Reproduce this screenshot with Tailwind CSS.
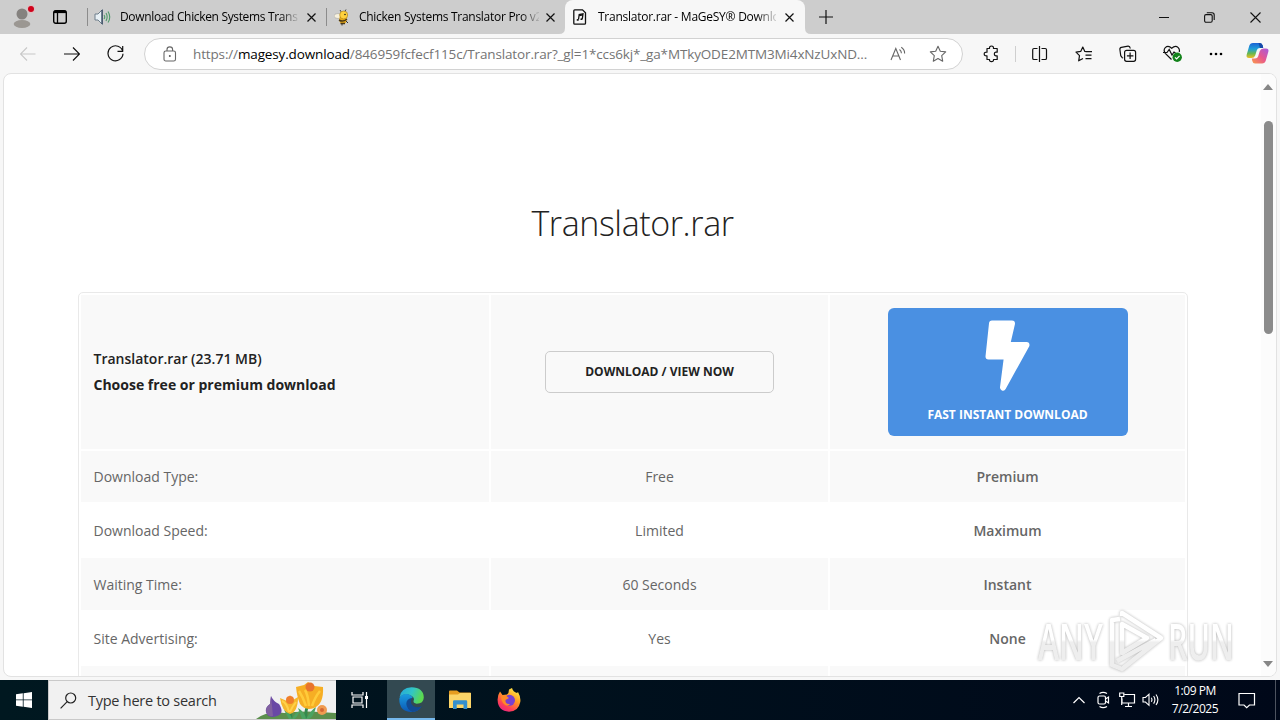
<!DOCTYPE html>
<html lang="en">
<head>
<meta charset="utf-8">
<title>Translator.rar - MaGeSY® Download</title>
<script src="https://cdn.jsdelivr.net/npm/@tailwindcss/browser@4"></script>
</head>
<body class="w-[1280px] h-[720px] overflow-hidden flex flex-col relative bg-[#f7f7f7] font-['Open_Sans',sans-serif] text-black">

<!-- Tab strip -->
<div class="h-[34px] shrink-0 bg-[#cdcdcd] flex items-stretch">
  <div class="w-11 flex items-center pl-[11px]">
    <svg width="26" height="28" viewBox="0 0 26 28"><ellipse cx="11" cy="21" rx="8.3" ry="4" fill="#9b9792"/><circle cx="11" cy="11" r="5.500" fill="#85827f"/><circle cx="20" cy="6" r="4.200" fill="#dcbfc1"/><circle cx="20" cy="6" r="3" fill="#d0021b"/></svg>
  </div>
  <div class="w-[43px] flex items-center pl-[9px]">
    <svg width="14" height="14" viewBox="0 0 14 14" fill="none" stroke="#000"><rect x=".7" y=".7" width="12.600" height="12.600" rx="2" stroke-width="1.400"/><path d="M4.500 3V13" stroke-width="1.300"/><path d="M1 1.900H13" stroke-width="2.400"/></svg>
  </div>
  <div class="w-px my-[8px] bg-[#8c8c8c]"></div>
  <div class="w-[238px] flex items-center pl-[6px]">
    <svg class="shrink-0" width="17" height="18" viewBox="0 0 17 18"><path d="M1 6H4L8.500 1.500V16.500L4 12H1Z" fill="#e8f0f5" stroke="#6e7f8c"/><path d="M8 2V16" stroke="#3e4f66" stroke-width="1.400"/><g fill="none" stroke="#4f9a6a" stroke-width="1.100"><path d="M10 7Q11.500 9 10 11M12 5Q14.300 9 12 13M14 3.500Q17.500 9 14 14.500"/></g></svg>
    <div class="ml-[9px] w-[180px] h-5 leading-5 text-[12px] tracking-[-0.34px] whitespace-nowrap overflow-hidden [mask-image:linear-gradient(to_right,#000_160px,transparent_180px)]">Download Chicken Systems Trans</div>
    <svg class="ml-[7px] shrink-0" width="9" height="9" viewBox="0 0 9 9" stroke="#111" stroke-width="1.200"><path d="M.5.5L8.500 8.500M8.500.5L.5 8.500"/></svg>
  </div>
  <div class="w-px my-[8px] bg-[#8c8c8c]"></div>
  <div class="w-[238px] flex items-center pl-[7px]">
    <svg class="shrink-0" width="16" height="18" viewBox="0 0 16 18"><path d="M6 2L8 5M12 1.500L10.500 4" stroke="#444" fill="none"/><ellipse cx="4" cy="8" rx="4" ry="2.500" fill="#f7f1de" stroke="#999" stroke-width=".5"/><ellipse cx="9" cy="11.500" rx="3.800" ry="4.500" fill="#e9ab16"/><path d="M5 12Q9 14.500 13 11M6.500 15.500H11" stroke="#473719" stroke-width="1.500" fill="none"/><circle cx="9.700" cy="7" r="4" fill="#ffd13c" stroke="#a67814" stroke-width=".6"/><circle cx="11" cy="6.500" r=".8" fill="#222"/><path d="M12 13L14 15M8 16V17.500" stroke="#333"/></svg>
    <div class="ml-[9px] w-[180px] h-5 leading-5 text-[12px] tracking-[-0.28px] whitespace-nowrap overflow-hidden [mask-image:linear-gradient(to_right,#000_162px,transparent_182px)]">Chicken Systems Translator Pro v2</div>
    <svg class="ml-[7px] shrink-0" width="9" height="9" viewBox="0 0 9 9" stroke="#111" stroke-width="1.200"><path d="M.5.5L8.500 8.500M8.500.5L.5 8.500"/></svg>
  </div>
  <div class="w-[240px] rounded-t-lg bg-[#f7f7f7] flex items-center pl-[8px] relative">
    <svg class="absolute -left-[6px] bottom-0" width="6" height="6"><path d="M6 0V6H0Q6 6 6 0" fill="#f7f7f7"/></svg>
    <svg class="absolute -right-[6px] bottom-0" width="6" height="6"><path d="M0 0V6H6Q0 6 0 0" fill="#f7f7f7"/></svg>
    <svg class="shrink-0" width="14" height="16" viewBox="0 0 14 16" fill="none" stroke="#111" stroke-width="1.300"><path d="M1.700.8H9.500L12.500 3.800V14.300Q12.500 15.200 11.500 15.200H1.700Q.8 15.200.8 14.300V1.700Q.8.8 1.700.8Z"/><path d="M5.500 10.500L6.200 5.500L10 4.800L9.300 9.800"/><path d="M6.200 6.500L9.900 5.800"/><ellipse cx="4.700" cy="10.900" rx="1.100" ry=".9" fill="#111" stroke="none"/><ellipse cx="8.500" cy="10.200" rx="1.100" ry=".9" fill="#111" stroke="none"/></svg>
    <div class="ml-[11px] w-[178px] h-5 leading-5 text-[12px] tracking-[-0.25px] whitespace-nowrap overflow-hidden [mask-image:linear-gradient(to_right,#000_158px,transparent_182px)]">Translator.rar - MaGeSY® Downlo</div>
    <svg class="ml-[9px] shrink-0" width="9" height="9" viewBox="0 0 9 9" stroke="#111" stroke-width="1.200"><path d="M.5.5L8.500 8.500M8.500.5L.5 8.500"/></svg>
  </div>
  <div class="w-[42px] flex items-center justify-center"><svg width="14" height="14" stroke="#111" stroke-width="1.200"><path d="M7 0V14M0 7H14"/></svg></div>
  <div class="ml-auto w-[138px] pr-px -translate-x-px flex items-center">
    <div class="flex-1 flex justify-center"><svg width="10" height="10" stroke="#111"><path d="M0 5.500H10"/></svg></div>
    <div class="flex-1 flex justify-center"><svg width="11" height="11" fill="none" stroke="#111" stroke-width="1.100"><rect x=".6" y="2.600" width="7.600" height="7.600" rx="1.400"/><path d="M2.800.7H8Q10.200.7 10.200 3V8"/></svg></div>
    <div class="flex-1 flex justify-center"><svg width="11" height="11" stroke="#111" stroke-width="1.100"><path d="M.5.5L10.500 10.500M10.500.5L.5 10.500"/></svg></div>
  </div>
</div>

<!-- Address bar and toolbar -->
<div class="h-[39px] shrink-0 flex items-center">
  <div class="w-[144px] flex items-center pl-[20px] gap-[28px]">
    <svg width="16" height="16" viewBox="0 0 16 16" fill="none" stroke="#c8c8c8" stroke-width="1.100"><path d="M.5 8H15.500M7 1.500L.5 8L7 14.500"/></svg>
    <svg width="16" height="16" viewBox="0 0 16 16" fill="none" stroke="#111" stroke-width="1.200"><path d="M0 8H15.500M9 1.500L15.500 8L9 14.500"/></svg>
    <svg class="-ml-px" width="17" height="17" viewBox="0 0 17 17" fill="none" stroke="#111" stroke-width="1.200"><path d="M15.800 6.500A7.500 7.500 0 1 0 16 8.800M15.700 1V6.300H10.500"/></svg>
  </div>
  <div class="w-[819px] h-8 rounded-full bg-white border border-[#d2d2d2] flex items-center pl-[18px]">
    <svg width="14" height="16" viewBox="0 0 14 16" fill="none" stroke="#666" stroke-width="1.100"><rect x="1" y="5" width="11.500" height="10" rx="1.800"/><path d="M4 5V3.500Q4 .9 6.800.9Q9.600.9 9.600 3.500V5"/><circle cx="6.800" cy="10" r="1" fill="#555" stroke="none"/></svg>
    <div class="ml-[16px] w-[676px] whitespace-nowrap text-[13.500px] leading-5 text-[#747474] tracking-[-0.142px]"><span>https://</span><span class="text-black">magesy.download</span><span>/846959fcfecf115c/Translator.rar?_gl=1*ccs6kj*_ga*MTkyODE2MTM3Mi4xNzUxND...</span></div>
    <svg class="ml-[21px]" width="17" height="16" viewBox="0 0 17 16" fill="none" stroke="#666" stroke-width="1.100"><path d="M1 14L5.800 2.500L10.500 14M2.700 10H8.900M9.500 3.500Q11.500 5 11.400 7.200M11.300 1.300Q14.800 3.800 14.600 7.500"/></svg>
    <svg class="ml-[22px]" width="18" height="18" viewBox="0 0 18 18" fill="none" stroke="#666" stroke-width="1.100" stroke-linejoin="round"><path d="M9 1.200L11.300 6.200L16.700 6.900L12.700 10.600L13.700 16.200L9 13.500L4.300 16.200L5.300 10.600L1.300 6.900L6.700 6.200Z"/></svg>
  </div>
  <div class="flex-1 flex items-center pl-[20px]">
    <svg width="18" height="18" viewBox="0 0 18 18" fill="none" stroke="#111" stroke-width="1.200" stroke-linejoin="round"><path d="M4 3.500H6.500Q6.300 1 8.500 1Q10.700 1 10.500 3.500H14.200V7.200H12.800Q11.300 7.400 11.300 9Q11.300 10.600 12.800 10.800H14.200V14.500H10.500Q10.700 16.700 8.500 16.700Q6.300 16.700 6.500 14.500H4V10.800Q1.200 11 1.200 9Q1.200 7 4 7.200Z"/></svg>
    <div class="ml-[14px] w-px h-4 bg-[#cfcfcf]"></div>
    <svg class="ml-[16px]" width="16" height="16" viewBox="0 0 16 16" fill="none" stroke="#111" stroke-width="1.200"><path d="M7.500 0V16M5.500 2.500H2Q.7 2.500.7 3.800V12.200Q.7 13.500 2 13.500H5.500M9.500 2.500H13.200Q14.500 2.500 14.500 3.800V12.200Q14.500 13.500 13.200 13.500H9.500"/></svg>
    <svg class="ml-[27px]" width="18" height="18" viewBox="0 0 18 18" fill="none" stroke="#111" stroke-width="1.200" stroke-linejoin="round"><path d="M11.500 6.500H9.800L7.800 2L5.700 6.400L1 7.100L4.500 10.700L3.700 15.800L8 13.500M10.500 6.700H17M10.500 10.200H16.500M10.500 13.700H16.500"/></svg>
    <svg class="ml-[26px]" width="18" height="18" viewBox="0 0 18 18" fill="none" stroke="#111" stroke-width="1.200"><path d="M4.200 13L3.300 12.700Q1.200 11 1.500 9L.9 4.500Q.6 2.700 2.400 2.400L9 1.200Q10.900 1 11.300 3.500"/><rect x="5.600" y="5.300" width="11" height="11" rx="2"/><path d="M11.100 7.500V14M7.900 10.800H14.400"/></svg>
    <svg class="ml-[26px]" width="20" height="19" viewBox="0 0 20 19" fill="none" stroke="#111" stroke-width="1.200"><path d="M8.500 15.500L2.300 9.300Q0 6 2.300 3.600Q5.200 1 8.700 4.200Q12.300 1 15.200 3.600Q17 5.500 16.200 8M0 8.500H4L6.200 5.500L9 11L11 8L12.500 9"/><circle cx="14.200" cy="13.300" r="4.700" fill="#13831b" stroke="none"/><path d="M12 13.300L13.600 14.900L16.600 11.900" stroke="#fff"/></svg>
    <svg class="ml-[26px]" width="14" height="4"><circle cx="2" cy="2" r="1.300"/><circle cx="7" cy="2" r="1.300"/><circle cx="12" cy="2" r="1.300"/></svg>
    <svg class="ml-[23px]" width="23" height="21" viewBox="0 0 23 21"><defs><linearGradient id="cpa" x1="0" y1="0" x2="0" y2="1"><stop offset="0" stop-color="#1b62d5"/><stop offset=".4" stop-color="#1f9fd8"/><stop offset=".7" stop-color="#69b850"/><stop offset="1" stop-color="#f1bd22"/></linearGradient><linearGradient id="cpb" x1="1" y1="0" x2="0" y2="1"><stop offset="0" stop-color="#a45be0"/><stop offset=".5" stop-color="#e8588d"/><stop offset="1" stop-color="#fa9a4b"/></linearGradient></defs><path d="M7 0H14Q16 0 16.700 2.500L17.200 5H14Q11.500 5 10.800 7.200L9.200 12.500Q8.300 15 5.500 15H3Q0 15 .6 12L3.200 3Q4 0 7 0Z" fill="url(#cpa)"/><path d="M16 20.500H9Q7 20.500 6.300 18L5.800 15.500H9Q11.500 15.500 12.200 13.300L13.800 8Q14.700 5.500 17.500 5.500H20Q23 5.500 22.400 8.500L19.800 17.500Q19 20.500 16 20.500Z" fill="url(#cpb)"/><path d="M14 0Q16 0 16.700 2.500L17.200 5H14L12.500 0Z" fill="#1649a8"/></svg>
  </div>
</div>

<!-- Page viewport -->
<div class="mx-[3px] h-[604px] shrink-0 rounded-lg border border-[#e2e2e2] bg-white overflow-hidden flex">
  <main class="w-[1257px] flex flex-col">
    <h1 class="mt-[124px] h-[50px] leading-[50px] text-center text-[34px] font-light text-[#222] tracking-[-0.4px]">Translator.rar</h1>
    <div class="mt-[44px] ml-[74px] w-[1110px] h-[440px] shrink-0 rounded-[5px] border border-[#e9e9e9] p-[2px] grid grid-cols-[408px_337px_355px] grid-rows-[154px_51px_52px_52px_52px_52px] gap-[2px] text-[14px] text-[#666] *:flex *:items-center">
      <div class="bg-[#f9f9f9] pl-[12.500px] leading-[26px] text-[#222]"><div><p class="font-semibold">Translator.rar (23.71 MB)</p><p class="font-bold">Choose free or premium download</p></div></div>
      <div class="bg-[#f9f9f9] justify-center"><div class="w-[229px] h-[42px] rounded-[5px] border border-[#ccc] flex items-center justify-center text-[12px] font-bold text-[#222]">DOWNLOAD / VIEW NOW</div></div>
      <div class="bg-[#f9f9f9] justify-center"><div class="w-[240px] h-[128px] rounded-[6px] bg-[#4a90e2] flex flex-col items-center pt-[12px] text-white text-[12px] font-bold">
        <svg width="46" height="72" viewBox="0 0 46 72" fill="#fff" stroke="#fff" stroke-width="6" stroke-linejoin="round"><path d="M7 3.500H27L22 25H41.500L18 67.500L22 36.500H3.500Z"/></svg>
        <span class="mt-[14px] leading-[18px]">FAST INSTANT DOWNLOAD</span></div></div>
      <div class="bg-[#f9f9f9] pl-[12.500px]">Download Type:</div><div class="bg-[#f9f9f9] justify-center">Free</div><div class="bg-[#f9f9f9] justify-center font-semibold">Premium</div>
      <div class="pl-[12.500px]">Download Speed:</div><div class="justify-center">Limited</div><div class="justify-center font-semibold">Maximum</div>
      <div class="bg-[#f9f9f9] pl-[12.500px]">Waiting Time:</div><div class="bg-[#f9f9f9] justify-center">60 Seconds</div><div class="bg-[#f9f9f9] justify-center font-semibold">Instant</div>
      <div class="pl-[12.500px]">Site Advertising:</div><div class="justify-center">Yes</div><div class="justify-center font-semibold">None</div>
      <div class="bg-[#f9f9f9]"></div><div class="bg-[#f9f9f9]"></div><div class="bg-[#f9f9f9]"></div>
    </div>
  </main>
  <div class="flex-1 bg-[#fcfcfc] flex flex-col items-center pt-[10px] pb-[9px] pr-[1px]">
    <svg width="10" height="6"><path d="M5 0L10 6H0Z" fill="#868686"/></svg>
    <div class="mt-[31px] w-[9px] h-[213px] rounded-full bg-[#8b8b8b]"></div>
    <svg class="mt-auto" width="10" height="6"><path d="M0 0H10L5 6Z" fill="#868686"/></svg>
  </div>
</div>

<!-- Taskbar -->
<div class="mt-[3px] h-10 shrink-0 bg-linear-to-r from-[#001820] to-[#000819] flex items-stretch text-white">
  <div class="w-12 flex items-center justify-center"><svg width="16" height="16" fill="#fff"><path d="M0 2.300L6.800 1.300V7.500H0ZM7.600 1.200L16 0V7.500H7.600ZM0 8.300H6.800V14.700L0 13.700ZM7.600 8.300H16V16L7.600 14.800Z"/></svg></div>
  <div class="w-[288px] bg-[#f1f1f1] border border-[#c9c9c9] border-r-0 flex items-center pl-[11px]">
    <svg width="17" height="17" viewBox="0 0 17 17" fill="none" stroke="#222" stroke-width="1.200"><circle cx="10.700" cy="6" r="5"/><path d="M7.200 9.700L.6 16.300"/></svg>
    <div class="ml-[11px] w-[160px] pt-[2px] text-[14.500px] tracking-[-0.25px] text-[#333]">Type here to search</div>
    <svg class="ml-auto" width="80" height="38" viewBox="0 0 80 38"><path d="M0 38Q12 29 28 32Q48 29 79 32H80V38Z" fill="#5b8f4c"/><path d="M15 15Q17 20 23 23Q29 32 21 35Q12 38 10 31Q9 26 14 23Z" fill="#6948a5"/><path d="M15 15L17 35Q11 36 10 30Q10 26 14 23Z" fill="#80609f"/><path d="M35 38Q34 30 35 26M50 38Q49 25 54 24" stroke="#338a4f" stroke-width="3" fill="none"/><path d="M28 29Q34 31 36 38Q39 31 44 30Q40 38 38 38H33ZM42 27Q49 31 50 38Q56 28 60 26Q57 38 52 38H46Z" fill="#4ba361"/><path d="M24 17L31 20L34 14L37 19L42 16Q42 31 34 33Q26 31 24 17Z" fill="#f6b72b"/><circle cx="34" cy="19" r="4" fill="#ef7e2c"/><path d="M26 20Q31 22 33 31M40 21Q36 26 34 31" stroke="#ffd04a" stroke-width="2" fill="none"/><path d="M40 6L48 4L52 1L58 5L67 6Q68 23 58 27Q49 30 44 23Q41 16 40 6Z" fill="#f6ae24"/><circle cx="54" cy="6" r="4.500" fill="#e8742d"/><path d="M43 10Q47 16 50 25M49 9Q52 14 53 25M64 10Q59 16 56 25" stroke="#ffcb3a" stroke-width="2.500" fill="none"/><circle cx="66" cy="29" r="5" fill="#ef9b51"/><circle cx="66" cy="29" r="2" fill="#d26632"/></svg>
  </div>
  <div class="w-[51px] flex items-center justify-center pr-[3px]"><svg width="18" height="16" fill="none" stroke="#fff" stroke-width="1.200"><path d="M1 0V3H12V0M1 16V13H12V16M2 5H11V11H2ZM15.500 0V16"/><path d="M14 4H17V7H14Z" fill="#fff" stroke="none"/></svg></div>
  <div class="w-12 bg-[#334951] border-b-2 border-[#76b9ed] flex items-center justify-center">
    <svg width="25" height="25" viewBox="0 0 24 24"><defs><linearGradient id="ea" x1="0" y1="0" x2="1" y2=".3"><stop offset="0" stop-color="#24a5dc"/><stop offset=".55" stop-color="#32c5c6"/><stop offset="1" stop-color="#5bd950"/></linearGradient><linearGradient id="eb" x1="0" y1="0" x2="0" y2="1"><stop offset="0" stop-color="#1a9de0"/><stop offset="1" stop-color="#0c57b4"/></linearGradient></defs><path d="M.5 10Q2 .5 12 .3Q23.500.7 23.800 10Q23.500 16 17 16Q13.500 15.500 14 13.500Q15.500 10 11 8Q5 5 .5 10Z" fill="url(#ea)"/><path d="M.3 11Q3 5.500 9 7Q13 8.500 13 10.500Q9.500 11 9.500 15Q10 20 15 21Q19 21.500 21.500 19Q18 24 12 24Q0 23.500.3 11Z" fill="url(#eb)"/><path d="M13 10.500Q7 11 7 16Q7.500 21.500 13 23.900Q19 23.500 22 18.300Q18 20.500 14 18.500Q11 16.500 11.500 13Q12 11 13 10.500Z" fill="#134a91"/></svg>
  </div>
  <div class="w-[49px] flex items-center justify-center"><svg width="22" height="20" viewBox="0 0 22 20"><path d="M0 1.500Q0 .5 1 .5H8L10.500 2.500H21Q22 2.500 22 3.500V6H0Z" fill="#e69d20"/><path d="M0 4.500H9L11 3H22V18H0Z" fill="#fcd568"/><path d="M4 19V11.500Q4 10.300 5.200 10.300H17Q18.200 10.300 18.200 11.500V19H14.500V14.500H7.700V19Z" fill="#338fce"/></svg></div>
  <div class="w-[49px] flex items-center justify-center"><svg width="24" height="24" viewBox="0 0 24 24"><defs><linearGradient id="fx" x1=".8" y1="0" x2=".2" y2="1"><stop offset="0" stop-color="#fff14b"/><stop offset=".4" stop-color="#ff9b21"/><stop offset=".75" stop-color="#ff4055"/><stop offset="1" stop-color="#e52088"/></linearGradient></defs><path d="M3 3.500L5.500 7L10 6.500Q12 5 12 1.500L15 0Q16 4 20 5L21 4Q24 9 23.300 14Q21.500 23.500 12 23.700Q1 23 .6 12Q.5 7 3 3.500Z" fill="url(#fx)"/><circle cx="12.500" cy="12.300" r="5.500" fill="#7840d0"/><path d="M4 8Q8 6 12 10L8.500 12Q8 16.500 13 16Q10 20 6 15Q4 12 4 8Z" fill="#ff8a26"/></svg></div>
  <div class="ml-auto w-[212px] flex items-center relative">
    <svg class="ml-[5px]" width="12" height="8" fill="none" stroke="#fff" stroke-width="1.200"><path d="M.5 7L6 1.500L11.500 7"/></svg>
    <svg class="ml-[12px]" width="14" height="18" fill="none" stroke="#fff" stroke-width="1.200"><rect x="1" y="5" width="7.500" height="8" rx="1.500"/><path d="M8.500 8L11.500 6V12L8.500 10M2.500 2.500Q6 .2 10 2.500M2.500 15.500Q6 17.800 10 15.500"/></svg>
    <svg class="ml-[8px]" width="17" height="16" fill="none" stroke="#fff" stroke-width="1.200"><path d="M5.500 2.500H15.500V11H3V6.500M9.500 11V14.500M6 14.500H13M.7 1H4.800V4.500H.7ZM2.700 4.500V13"/></svg>
    <svg class="ml-[6px]" width="18" height="16" fill="none" stroke="#fff" stroke-width="1.100"><path d="M1 5.500H3.500L7 2.200V13.300L3.500 10H1ZM9.300 5.800Q10.600 7.800 9.300 9.800M11.600 4Q14.200 7.800 11.600 11.600M14 2.500Q17.800 7.800 14 13"/></svg>
    <div class="ml-[7px] w-[56px] text-center text-[12px] leading-[18px] tracking-[-0.45px] whitespace-nowrap"><div>1:09 PM</div><div>7/2/2025</div></div>
    <svg class="ml-[15px]" width="18" height="17" fill="none" stroke="#fff" stroke-width="1.200"><path d="M1 1.500H16.500V13H11.500L8.700 15.700L6 13H1Z"/></svg>
    <div class="absolute right-[4px] top-0 w-px h-10 bg-[#4d535f]"></div>
  </div>
</div>

<!-- Watermark over the page -->
<svg class="absolute left-[1030px] top-[602px]" width="210" height="76" viewBox="0 0 210 76">
  <defs><linearGradient id="wm" gradientUnits="userSpaceOnUse" x1="0" y1="8" x2="0" y2="70"><stop offset="0" stop-color="#fff"/><stop offset=".48" stop-color="#fff"/><stop offset=".52" stop-color="#ececec"/><stop offset="1" stop-color="#ececec"/></linearGradient></defs>
  <g class="[filter:drop-shadow(0_0_1.5px_rgba(0,0,0,.35))]" opacity=".85">
    <g fill="url(#wm)" font-family="Open Sans, sans-serif" font-weight="600" font-size="50">
      <text x="8" y="58" textLength="65" lengthAdjust="spacingAndGlyphs">ANY</text>
      <text x="138" y="58" textLength="66" lengthAdjust="spacingAndGlyphs">RUN</text>
    </g>
    <g fill="none" stroke="url(#wm)" stroke-width="4.500" stroke-linejoin="round"><path d="M92 14V11L131 36L92 67L82 63V18L90 17M92 22V51L117 36ZM87 59L126 38"/></g>
  </g>
</svg>
</body>
</html>
